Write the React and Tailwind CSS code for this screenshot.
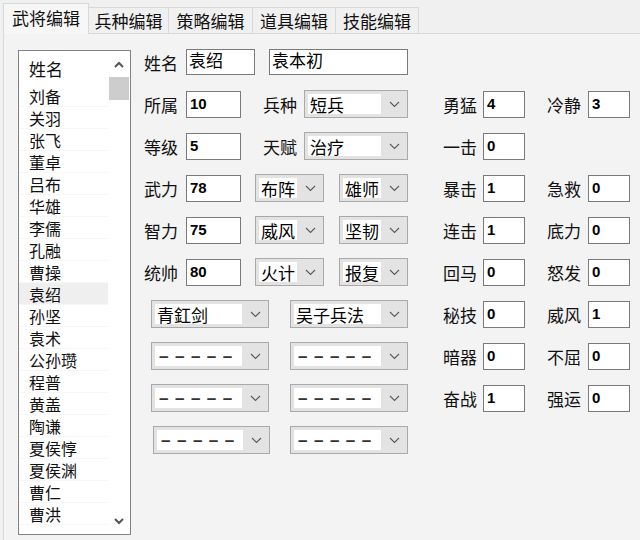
import React from "react";

const cjk = { fontFamily: '"Noto Sans CJK SC", "Noto Sans", sans-serif' };

const tabs = [
  { label: "武将编辑", w: "w-[86px]" },
  { label: "兵种编辑", w: "w-[80px]" },
  { label: "策略编辑", w: "w-[84px]" },
  { label: "道具编辑", w: "w-[83px]" },
  { label: "技能编辑", w: "w-[83px]" },
];

const names = [
  "刘备", "关羽", "张飞", "董卓", "吕布", "华雄", "李儒", "孔融", "曹操", "袁绍",
  "孙坚", "袁术", "公孙瓒", "程普", "黄盖", "陶谦", "夏侯惇", "夏侯渊", "曹仁", "曹洪",
];

const skills = [
  ["勇猛", "4", "冷静", "3"],
  ["一击", "0", null, null],
  ["暴击", "1", "急救", "0"],
  ["连击", "1", "底力", "0"],
  ["回马", "0", "怒发", "0"],
  ["秘技", "0", "威风", "1"],
  ["暗器", "0", "不屈", "0"],
  ["奋战", "1", "强运", "0"],
];

function Chevron() {
  return (
    <svg width="11" height="7" viewBox="0 0 11 7" className="text-[#5a5a5a]">
      <polyline points="1,1 5.5,5.5 10,1" fill="none" stroke="currentColor" strokeWidth="1.1" />
    </svg>
  );
}

function Label({ children }) {
  return <span className="w-[34px] shrink-0 text-[17px] leading-none text-[#111]">{children}</span>;
}

function NumBox({ value, w = "w-[55px]" }) {
  return (
    <div className={`${w} h-[27px] shrink-0 border border-[#7a7a7a] bg-white pl-[3px] pt-[4px] text-[15px] font-bold leading-none text-black`} style={{ fontFamily: '"Liberation Sans", Arial, sans-serif' }}>
      {value}
    </div>
  );
}

function TextBox({ value, w }) {
  return (
    <div className={`${w} h-[26px] shrink-0 border border-[#7a7a7a] bg-white pl-[2px] pt-[1px] text-[17px] leading-none text-black`}>
      {value}
    </div>
  );
}

function Select({ value, w, ml = "" }) {
  const dashes = value === null;
  return (
    <div className={`${w} ${ml} flex h-[28px] shrink-0 border border-[#a9a9a9] bg-[#e3e3e3]`}>
      <div className="flex flex-1 items-center bg-white m-[3px] mr-0 pl-[2px] text-[17px] leading-none text-black">
        {dashes ? (
          <span className="pl-[2px] text-[17px] font-bold tracking-[6.5px] text-[#333]" style={{ fontFamily: '"Liberation Sans", Arial, sans-serif' }}>
            –––––
          </span>
        ) : (
          value
        )}
      </div>
      <div className="flex w-[26px] items-center justify-center">
        <Chevron />
      </div>
    </div>
  );
}

function FormRow({ children }) {
  return <div className="flex h-[42px] items-center">{children}</div>;
}

export default function App() {
  return (
    <div className="w-[640px] h-[540px] overflow-hidden bg-[#f0f0f0]" style={cjk}>
      {/* Tabs */}
      <div className="flex h-[33px] items-end pl-[3px]">
        {tabs.map((t, i) =>
          i === 0 ? (
            <div key={t.label} className={`${t.w} relative z-10 -mb-px flex h-[31px] items-center justify-center border border-b-0 border-[#d9d9d9] bg-[#f7f7f7] pb-[2px] text-[17px] text-[#111]`}>
              {t.label}
            </div>
          ) : (
            <div key={t.label} className={`${t.w} flex h-[26px] items-center justify-center border border-l-0 border-b-0 border-[#d9d9d9] bg-[#f0f0f0] text-[17px] text-[#111]`}>
              {t.label}
            </div>
          )
        )}
      </div>

      {/* Panel */}
      <div className="ml-[3px] flex h-[507px] border-l border-t border-[#d9d9d9] bg-[#f3f3f3]">
        {/* Name list */}
        <div className="ml-[14px] mt-[16px] flex h-[485px] w-[113px] shrink-0 border border-[#828282] bg-white">
          <div className="flex-1 overflow-hidden">
            <div className="flex h-[34px] items-center pl-[10px] pt-[2px] text-[17px] text-[#111]">姓名</div>
            {names.map((n) => (
              <div
                key={n}
                className={`flex h-[22px] items-center pl-[10px] text-[16px] leading-none text-[#111] border-b border-[#f7f7f7] ${n === "袁绍" ? "bg-[#efefef]" : ""}`}
              >
                {n}
              </div>
            ))}
          </div>
          <div className="flex w-[22px] flex-col items-center bg-white">
            <div className="flex h-[26px] w-full items-center justify-center">
              <svg width="10" height="7" viewBox="0 0 10 7">
                <polyline points="1,6 5,2 9,6" fill="none" stroke="#555" strokeWidth="2" />
              </svg>
            </div>
            <div className="h-[23px] w-[20px] bg-[#cdcdcd]" />
            <div className="flex-1" />
            <div className="flex h-[26px] w-full items-center justify-center">
              <svg width="10" height="7" viewBox="0 0 10 7">
                <polyline points="1,1 5,5 9,1" fill="none" stroke="#555" strokeWidth="2" />
              </svg>
            </div>
          </div>
        </div>

        {/* Main form */}
        <div className="ml-[13px] mt-[7px] flex w-[264px] shrink-0 flex-col">
          <FormRow>
            <Label>姓名</Label>
            <div className="ml-[8px]"><TextBox value="袁绍" w="w-[69px]" /></div>
            <div className="ml-[14px]"><TextBox value="袁本初" w="w-[139px]" /></div>
          </FormRow>
          <FormRow>
            <Label>所属</Label>
            <div className="ml-[8px]"><NumBox value="10" /></div>
            <span className="ml-[22px] w-[34px] text-[17px] leading-none text-[#111]">兵种</span>
            <Select value="短兵" w="w-[104px]" ml="ml-[7px]" />
          </FormRow>
          <FormRow>
            <Label>等级</Label>
            <div className="ml-[8px]"><NumBox value="5" /></div>
            <span className="ml-[22px] w-[34px] text-[17px] leading-none text-[#111]">天赋</span>
            <Select value="治疗" w="w-[104px]" ml="ml-[7px]" />
          </FormRow>
          {[
            ["武力", "78", "布阵", "雄师"],
            ["智力", "75", "威风", "坚韧"],
            ["统帅", "80", "火计", "报复"],
          ].map(([l, v, a, b]) => (
            <FormRow key={l}>
              <Label>{l}</Label>
              <div className="ml-[8px]"><NumBox value={v} /></div>
              <Select value={a} w="w-[69px]" ml="ml-[14px]" />
              <Select value={b} w="w-[69px]" ml="ml-[15px]" />
            </FormRow>
          ))}
          <FormRow>
            <Select value="青釭剑" w="w-[118px]" ml="ml-[7px]" />
            <Select value="吴子兵法" w="w-[118px]" ml="ml-[21px]" />
          </FormRow>
          <FormRow>
            <Select value={null} w="w-[118px]" ml="ml-[7px]" />
            <Select value={null} w="w-[118px]" ml="ml-[21px]" />
          </FormRow>
          <FormRow>
            <Select value={null} w="w-[118px]" ml="ml-[7px]" />
            <Select value={null} w="w-[118px]" ml="ml-[21px]" />
          </FormRow>
          <FormRow>
            <Select value={null} w="w-[117px]" ml="ml-[9px]" />
            <Select value={null} w="w-[118px]" ml="ml-[20px]" />
          </FormRow>
        </div>

        {/* Skills */}
        <div className="ml-[35px] mt-[49px] flex shrink-0 flex-col">
          {skills.map(([l1, v1, l2, v2]) => (
            <FormRow key={l1}>
              <Label>{l1}</Label>
              <div className="ml-[6px]"><NumBox value={v1} w="w-[42px]" /></div>
              {l2 && (
                <>
                  <span className="ml-[22px] w-[34px] text-[17px] leading-none text-[#111]">{l2}</span>
                  <div className="ml-[7px]"><NumBox value={v2} w="w-[42px]" /></div>
                </>
              )}
            </FormRow>
          ))}
        </div>
      </div>
    </div>
  );
}
